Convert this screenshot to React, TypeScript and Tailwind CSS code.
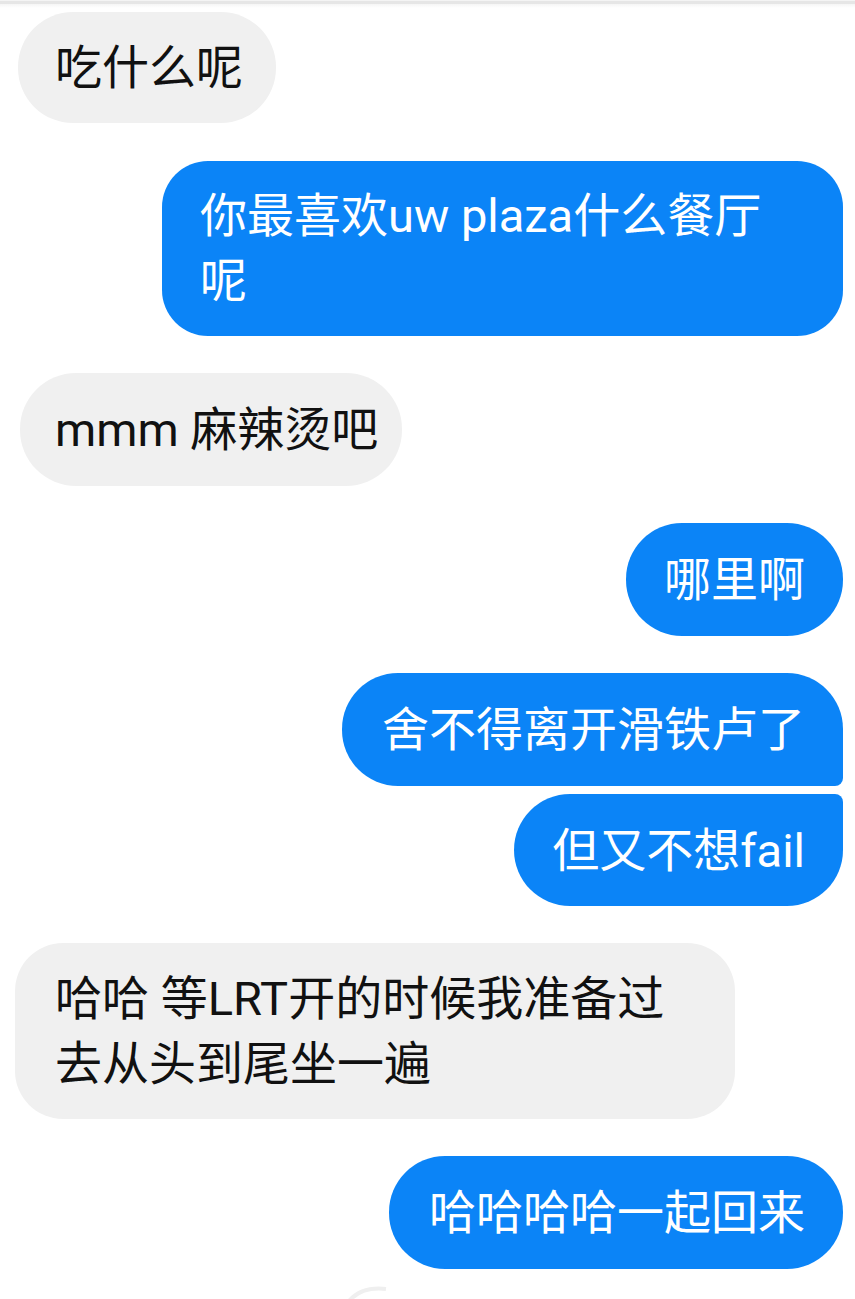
import React from "react";

const font = {
  fontFamily: "Roboto, 'Noto Sans CJK SC', sans-serif",
};

function Gray({ children, className = "" }: { children: React.ReactNode; className?: string }) {
  return (
    <div className={`self-start bg-[#f0f0f0] text-[#111111] text-[47px] leading-[65px] ${className}`}>
      {children}
    </div>
  );
}

function Blue({ children, className = "" }: { children: React.ReactNode; className?: string }) {
  return (
    <div className={`self-end bg-[#0b84f7] text-white text-[47px] leading-[65px] ${className}`}>
      {children}
    </div>
  );
}

export default function App() {
  return (
    <div className="w-[855px] h-[1299px] overflow-hidden bg-white relative" style={font}>
      <div className="h-[1px] bg-[#f4f4f4]" />
      <div className="h-[3px] bg-[#e6e6e6]" />
      <div className="h-[4px] bg-gradient-to-b from-[#f5f5f5] to-white" />
      <div className="flex flex-col pl-[18px] pr-[12px] pt-[4px]">
        <Gray className="rounded-[55px] pt-[23px] pb-[23px] pl-[37px] pr-[33px]">吃什么呢</Gray>
        <Blue className="mt-[38px] w-[681px] rounded-[46px] pt-[22px] pb-[23px] px-[38px]">
          你最喜欢uw plaza什么餐厅
          <br />
          呢
        </Blue>
        <Gray className="mt-[37px] ml-[2px] rounded-[56px] py-[24px] pl-[35px] pr-[24px]">mmm 麻辣烫吧</Gray>
        <Blue className="mt-[37px] rounded-[56px] py-[24px] px-[38px]">哪里啊</Blue>
        <Blue className="mt-[37px] rounded-[56px] rounded-br-[8px] pt-[24px] pb-[24px] pl-[40px] pr-[38px]">舍不得离开滑铁卢了</Blue>
        <Blue className="mt-[8px] rounded-[56px] rounded-tr-[8px] pt-[24px] pb-[23px] px-[38px]">但又不想fail</Blue>
        <Gray className="mt-[37px] -ml-[3px] w-[720px] rounded-[48px] pt-[23px] pb-[23px] pl-[40px] pr-[30px]">
          哈哈 等LRT开的时候我准备过
          <br />
          去从头到尾坐一遍
        </Gray>
        <Blue className="mt-[37px] rounded-[56px] py-[24px] pl-[40px] pr-[38px]">哈哈哈哈一起回来</Blue>
        <div className="mt-[2px] ml-[318px] w-[80px] h-[40px] relative">
          <svg width="80" height="40" viewBox="0 0 80 40" className="absolute left-0 top-0">
            <path d="M10 34 C 18 22, 32 16, 50 18" stroke="#efefef" strokeWidth="4" fill="none" />
          </svg>
        </div>
      </div>
    </div>
  );
}
